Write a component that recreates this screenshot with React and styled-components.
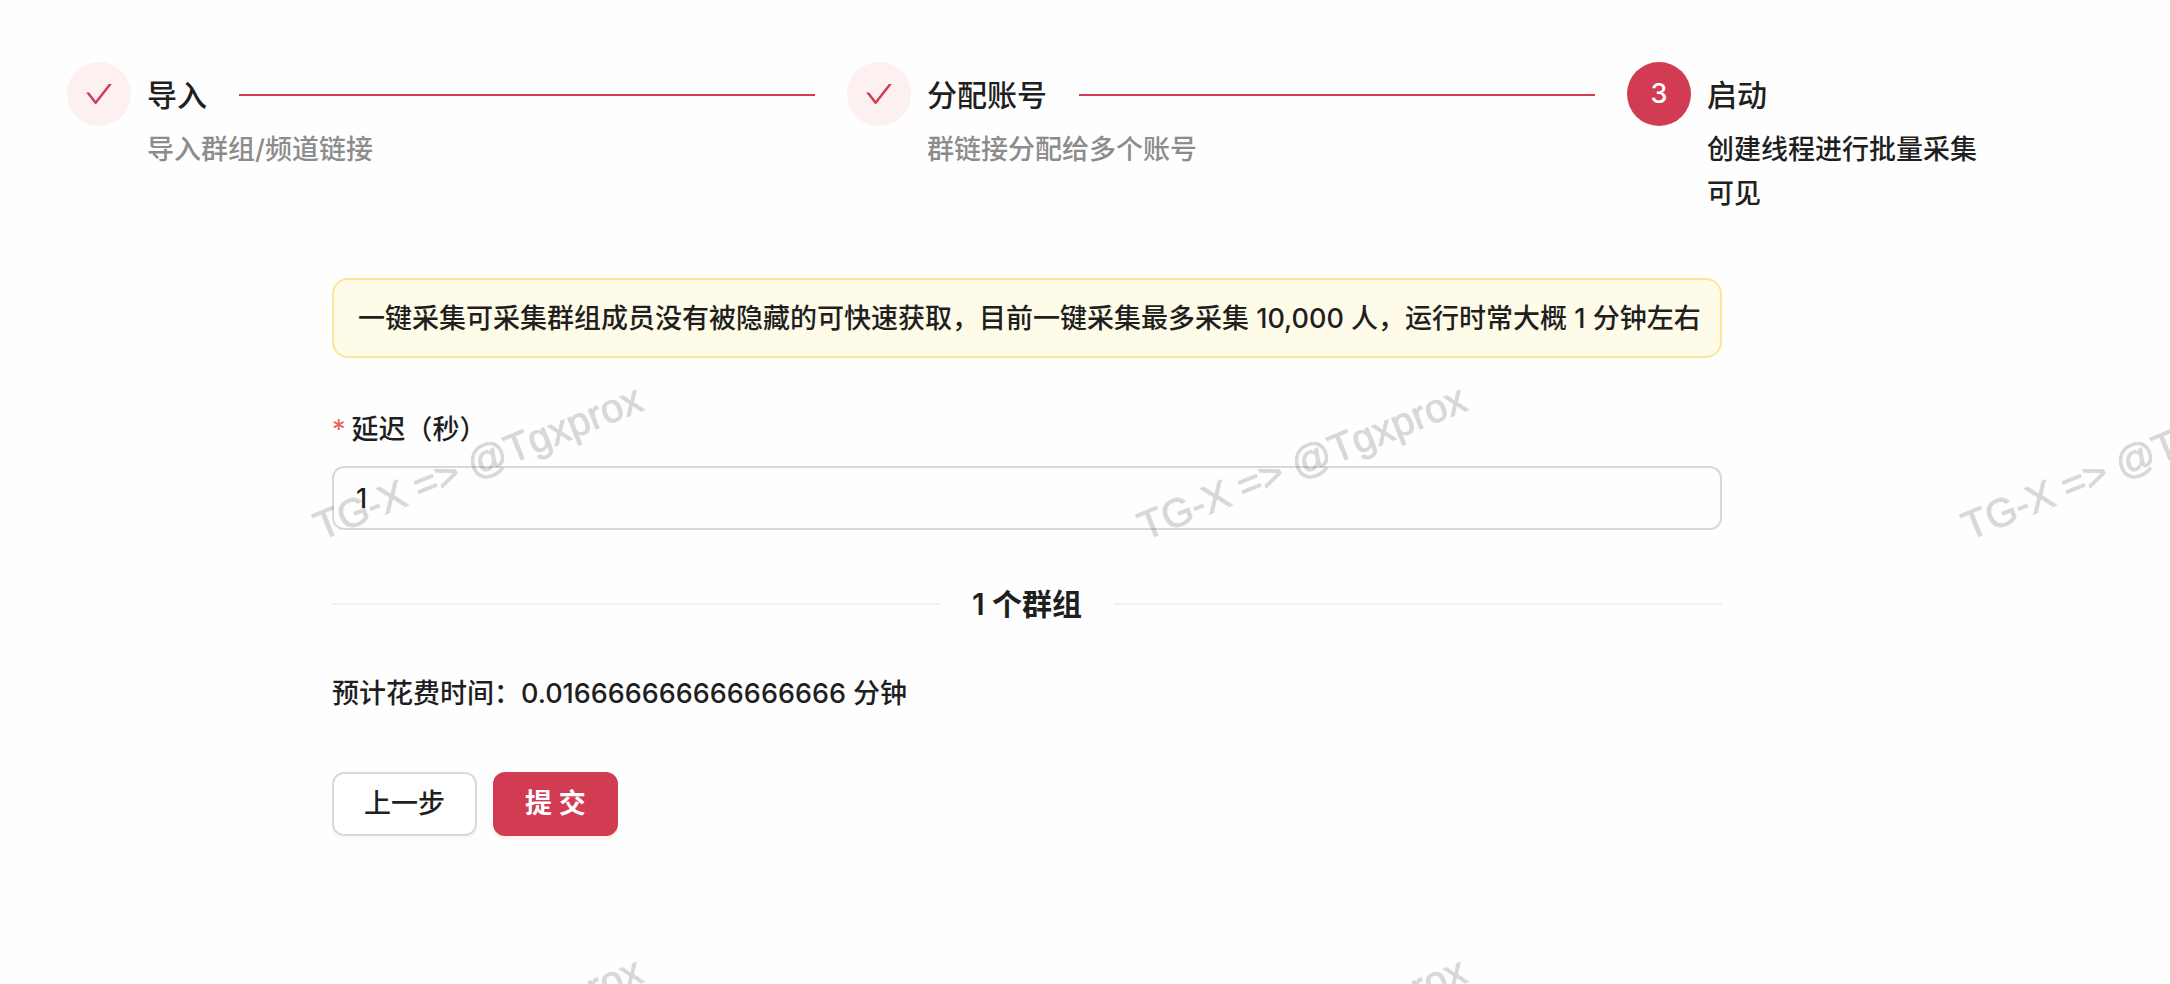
import React from "react";
import { useState } from "react";
import styled, { createGlobalStyle } from "styled-components";

const GlobalStyle = createGlobalStyle`
  * {
    box-sizing: border-box;
  }

  body {
    margin: 0;
    background: #fefefe;
    color: #1f1f1f;
    font-family: Inter, "Noto Sans CJK SC", sans-serif;
    font-size: 27px;
    font-weight: 500;
    line-height: 44px;
  }
`;

const Page = styled.main`
  min-height: 100vh;
  padding: 62px 183px 64px 67px;
`;

const Steps = styled.ol`
  display: flex;
  gap: 32px;
  margin: 0 0 62px;
  padding: 0;
  list-style: none;
`;

const Step = styled.li`
  display: flex;
  flex: ${(props) => (props.$last ? "none" : "1")};
  gap: 16px;
`;

const StepIcon = styled.span`
  display: flex;
  flex: none;
  justify-content: center;
  align-items: center;
  width: 64px;
  height: 64px;
  border-radius: 50%;
  color: ${(props) => (props.$active ? "#fff" : "#d13c53")};
  background: ${(props) => (props.$active ? "#d13c53" : "#fdf0f0")};
`;

const StepContent = styled.div`
  flex: 1;
`;

const StepTitle = styled.div`
  display: flex;
  align-items: center;
  gap: 32px;
  font-size: 30px;
  line-height: 66px;
  white-space: nowrap;
`;

const StepLine = styled.span`
  flex: 1;
  height: 2px;
  background: #d13c53;
`;

const StepText = styled.div`
  max-width: 280px;
  color: ${(props) => (props.$active ? "#1f1f1f" : "#8c8c8c")};
`;

const Form = styled.form`
  max-width: 1390px;
  margin: 0 auto;
`;

const Notice = styled.div`
  margin-bottom: 48px;
  padding: 17px 12px 15px 24px;
  border: 2px solid #fce597;
  border-radius: 16px;
  background: #fefbe8;
`;

const Field = styled.div`
  display: flex;
  flex-direction: column;
  gap: 14px;
  margin-bottom: 48px;
`;

const Label = styled.label`
  display: flex;
  gap: 6px;
  padding-top: 2px;
`;

const Required = styled.span`
  color: #ee5c57;
  font-weight: 400;
`;

const Input = styled.input`
  width: 100%;
  height: 64px;
  padding: 0 22px;
  border: 2px solid #d9d9d9;
  border-radius: 12px;
  outline: none;
  color: inherit;
  background: #fefefe;
  font: inherit;

  &:focus-visible {
    border-color: #d13c53;
  }
`;

const Divider = styled.h2`
  display: flex;
  align-items: center;
  gap: 32px;
  margin: 0 0 42px;
  font-size: 30px;
  font-weight: 600;
  line-height: 52px;

  &::before,
  &::after {
    content: "";
    flex: 1;
    height: 2px;
    background: #f0f0f0;
  }
`;

const Estimate = styled.p`
  margin: 0 0 56px;
`;

const Actions = styled.div`
  display: flex;
  gap: 16px;
`;

const Button = styled.button`
  height: 64px;
  padding: 0 30px;
  border: 2px solid ${(props) => (props.$primary ? "#d13c53" : "#d9d9d9")};
  border-radius: 12px;
  color: ${(props) => (props.$primary ? "#fff" : "inherit")};
  background: ${(props) => (props.$primary ? "#d13c53" : "#fff")};
  box-shadow: 0 4px 0 ${(props) => (props.$primary ? "#fdf3f3" : "#fafafa")};
  cursor: pointer;
  font: inherit;
  font-weight: ${(props) => (props.$primary ? "600" : "500")};
`;

const WatermarkLayer = styled.div`
  position: fixed;
  inset: 176px 0 0 66px;
  z-index: 10;
  display: grid;
  grid-template-columns: repeat(3, 824px);
  grid-auto-rows: 572px;
  place-items: center;
  overflow: hidden;
  pointer-events: none;
`;

const Mark = styled.span`
  color: #000;
  font-family: "Liberation Sans", sans-serif;
  font-size: 40px;
  font-weight: 400;
  white-space: nowrap;
  opacity: 0.15;
  transform: rotate(-22deg);
  -webkit-text-stroke: 1px #000;
`;

const steps = [
  { title: "导入", text: "导入群组/频道链接" },
  { title: "分配账号", text: "群链接分配给多个账号" },
  { title: "启动", text: "创建线程进行批量采集可见" },
];

function CheckIcon() {
  return (
    <svg viewBox="64 64 896 896" width="28" height="28" fill="currentColor" aria-hidden="true">
      <path d="M912 190h-69.9c-9.8 0-19.1 4.5-25.1 12.2L404.7 724.5 207 474a32 32 0 00-25.1-12.2H112c-6.7 0-10.4 7.7-6.3 12.9l273.9 347c12.8 16.2 37.4 16.2 50.3 0l488.4-618.9c4.1-5.1.4-12.8-6.3-12.8z" />
    </svg>
  );
}

function Watermark({ text }) {
  return (
    <WatermarkLayer aria-hidden="true">
      {[0, 1, 2, 3, 4, 5].map((index) => (
        <Mark key={index}>{text}</Mark>
      ))}
    </WatermarkLayer>
  );
}

export default function App() {
  const [delay, setDelay] = useState("1");
  const current = 2;

  return (
    <>
      <GlobalStyle />
      <Page>
        <Steps>
          {steps.map((step, index) => {
            const active = index === current;
            const last = index === steps.length - 1;

            return (
              <Step key={step.title} $last={last}>
                <StepIcon $active={active}>
                  {index < current ? <CheckIcon /> : index + 1}
                </StepIcon>
                <StepContent>
                  <StepTitle>
                    {step.title}
                    {!last && <StepLine />}
                  </StepTitle>
                  <StepText $active={active}>{step.text}</StepText>
                </StepContent>
              </Step>
            );
          })}
        </Steps>
        <Form onSubmit={(e) => e.preventDefault()}>
          <Notice>
            一键采集可采集群组成员没有被隐藏的可快速获取，目前一键采集最多采集 10,000 人，运行时常大概 1 分钟左右
          </Notice>
          <Field>
            <Label htmlFor="delay">
              <Required>*</Required>
              延迟（秒）
            </Label>
            <Input id="delay" value={delay} onChange={(e) => setDelay(e.target.value)} />
          </Field>
          <Divider>1 个群组</Divider>
          <Estimate>预计花费时间：0.016666666666666666 分钟</Estimate>
          <Actions>
            <Button type="button">上一步</Button>
            <Button type="submit" $primary>
              提 交
            </Button>
          </Actions>
        </Form>
      </Page>
      <Watermark text="TG-X => @Tgxprox" />
    </>
  );
}
